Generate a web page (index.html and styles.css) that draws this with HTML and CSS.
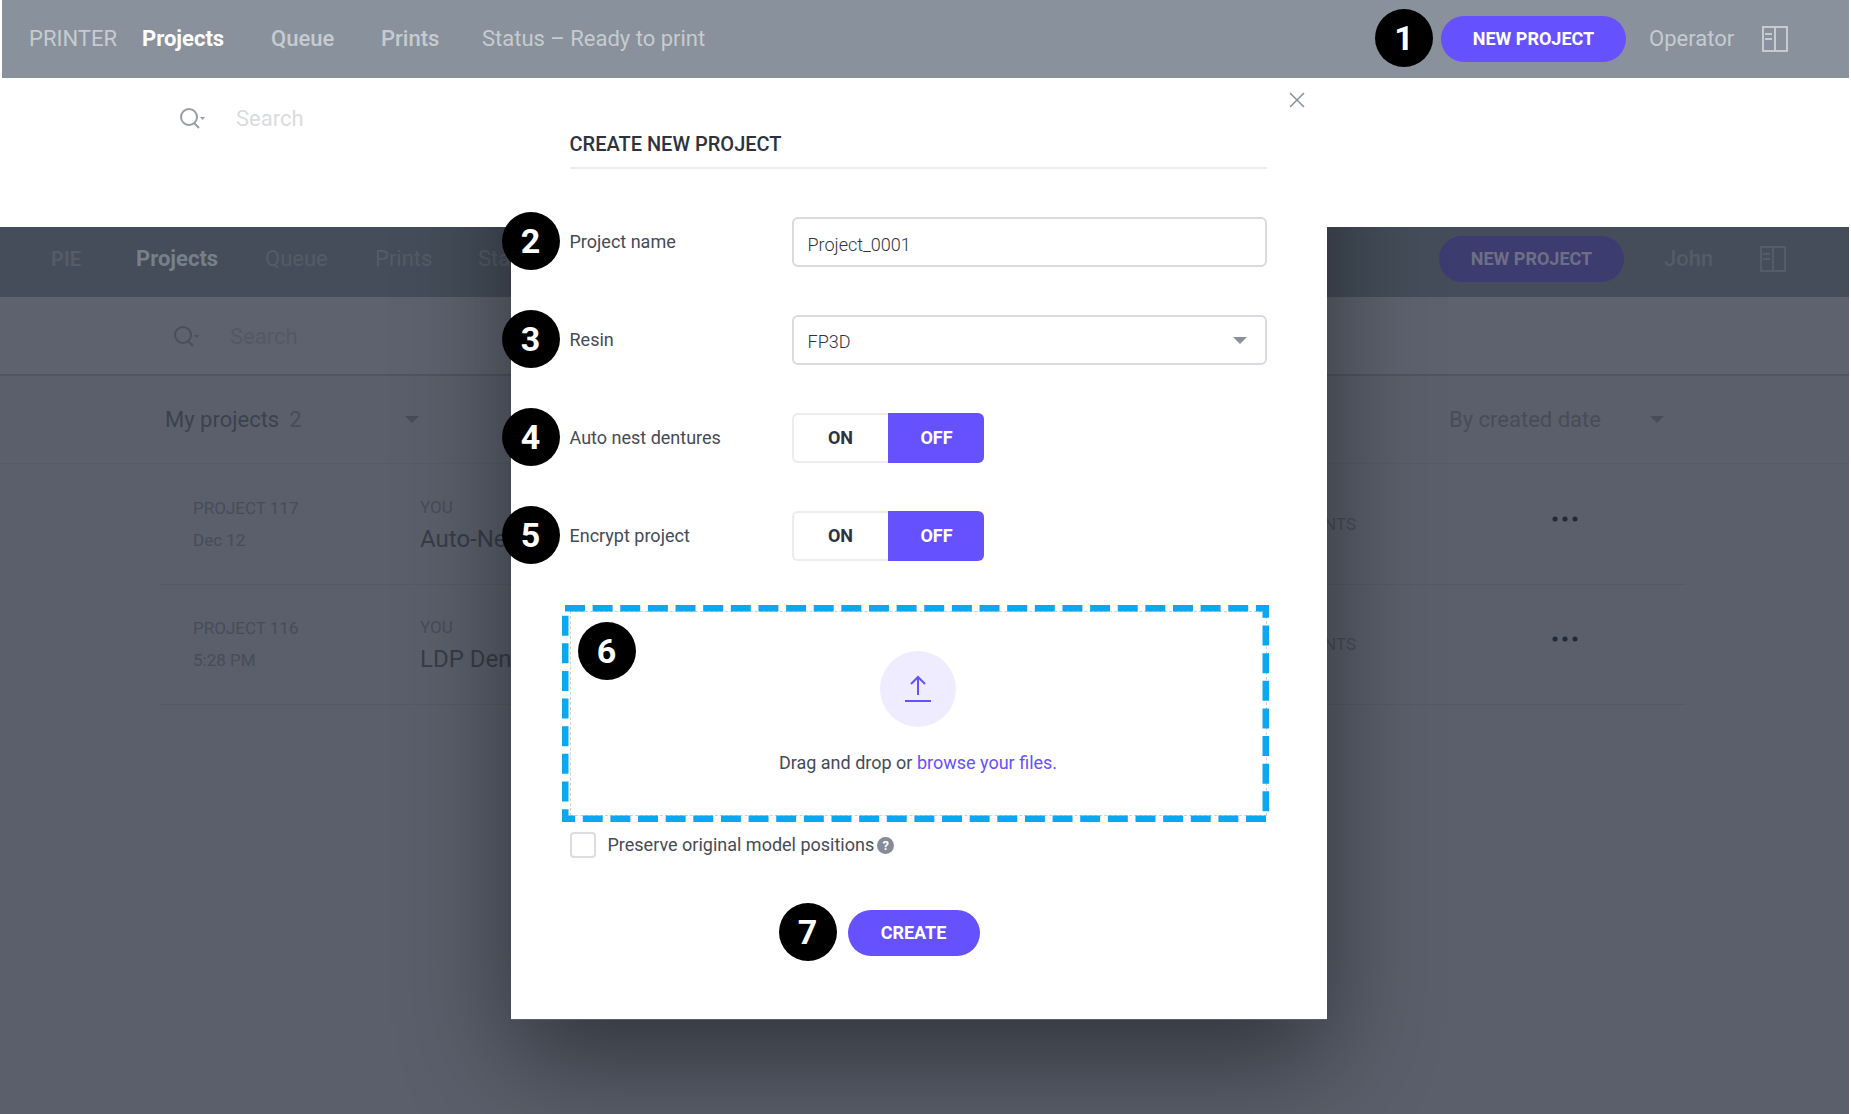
FILE: index.html
```html
<!DOCTYPE html>
<html lang="en">
<head>
  <meta charset="UTF-8" />
  <meta name="viewport" content="width=device-width, initial-scale=1.0"/>
  <title>Projects | Printer</title>
  <link rel="stylesheet" href="styles.css">
</head>
<body>

  <header class="topbar">
    <nav class="nav">
      <a href="#" class="brand">PRINTER</a>
      <a href="#" class="active">Projects</a>
      <a href="#" class="queue">Queue</a>
      <a href="#" class="prints">Prints</a>
      <a href="#" class="status">Status – Ready to print</a>
    </nav>
    <div class="account">
      <div class="step-anchor">
        <span class="step">1</span>
        <button class="pill" type="button">NEW PROJECT</button>
      </div>
      <a href="#" class="user">Operator</a>
      <button class="icon-btn" type="button" aria-label="Guide">
        <svg width="26" height="26" viewBox="0 0 26 26" fill="none" stroke="currentColor" stroke-width="2">
          <rect x="1" y="1" width="24" height="24"/>
          <path d="M13 1V25M3 8H10M3 13H10"/>
        </svg>
      </button>
    </div>
  </header>

  <div class="search">
    <svg class="search-icon" width="26" height="22" viewBox="0 0 26 22" fill="none" stroke="currentColor" stroke-width="2">
      <circle cx="9" cy="9" r="8"/>
      <path d="M14 15L19 20"/>
      <path d="M20 9H25L22.500 12Z" fill="currentColor" stroke="none"/>
    </svg>
    <input type="text" placeholder="Search" aria-label="Search projects">
  </div>

  <!-- dimmed application behind the dialog -->
  <main class="app">
    <header class="app-bar">
      <nav class="nav">
        <a href="#" class="brand">PIE</a>
        <a href="#" class="active">Projects</a>
        <a href="#" class="queue">Queue</a>
        <a href="#" class="prints">Prints</a>
        <a href="#" class="status">Status</a>
      </nav>
      <div class="account">
        <button class="pill" type="button">NEW PROJECT</button>
        <a href="#" class="user">John</a>
        <button class="icon-btn" type="button" aria-label="Guide">
          <svg width="26" height="26" viewBox="0 0 26 26" fill="none" stroke="currentColor" stroke-width="2">
            <rect x="1" y="1" width="24" height="24"/>
            <path d="M13 1V25M3 8H10M3 13H10"/>
          </svg>
        </button>
      </div>
    </header>

    <div class="app-search">
      <svg class="search-icon" width="26" height="22" viewBox="0 0 26 22" fill="none" stroke="currentColor" stroke-width="2">
        <circle cx="9" cy="9" r="8"/>
        <path d="M14 15L19 20"/>
        <path d="M20 9H25L22.500 12Z" fill="currentColor" stroke="none"/>
      </svg>
      <input type="text" placeholder="Search" aria-label="Search all projects">
    </div>

    <div class="filters">
      <button class="filter mine" type="button">My projects <span class="count">2</span><span class="caret"></span></button>
      <button class="filter sort" type="button">By created date<span class="caret"></span></button>
    </div>

    <table class="projects">
      <tr>
        <td class="when">PROJECT 117<br>Dec 12</td>
        <td class="what">YOU<br><span class="name">Auto-Nest</span></td>
        <td class="prints-count">PRINTS</td>
        <td class="more"><button type="button" aria-label="More">
          <svg width="26" height="6" viewBox="0 0 26 6" fill="currentColor"><circle cx="3" cy="3" r="2.500"/><circle cx="13" cy="3" r="2.500"/><circle cx="23" cy="3" r="2.500"/></svg>
        </button></td>
      </tr>
      <tr>
        <td class="when">PROJECT 116<br>5:28 PM</td>
        <td class="what">YOU<br><span class="name">LDP Denture</span></td>
        <td class="prints-count">PRINTS</td>
        <td class="more"><button type="button" aria-label="More">
          <svg width="26" height="6" viewBox="0 0 26 6" fill="currentColor"><circle cx="3" cy="3" r="2.500"/><circle cx="13" cy="3" r="2.500"/><circle cx="23" cy="3" r="2.500"/></svg>
        </button></td>
      </tr>
    </table>
    <div class="modal-shadow"></div>
  </main>

  <section class="modal" role="dialog" aria-labelledby="modalTitle">
    <button class="close" type="button" aria-label="Close">
      <svg width="16" height="16" viewBox="0 0 16 16" fill="none" stroke="currentColor" stroke-width="1.500"><path d="M1 1L15 15M15 1L1 15"/></svg>
    </button>
    <h1 id="modalTitle">CREATE NEW PROJECT</h1>

    <form>
      <div class="row">
        <span class="step">2</span>
        <label for="projectName">Project name</label>
        <input class="field" id="projectName" type="text" value="Project_0001">
      </div>

      <div class="row">
        <span class="step">3</span>
        <label for="resin">Resin</label>
        <div class="select">
          <select class="field" id="resin">
            <option>FP3D</option>
          </select>
          <span class="caret"></span>
        </div>
      </div>

      <div class="row" role="radiogroup" aria-labelledby="nestLabel">
        <span class="step">4</span>
        <span class="label" id="nestLabel">Auto nest dentures</span>
        <div class="toggle">
          <input type="radio" name="nest" id="nestOn"><label for="nestOn">ON</label>
          <input type="radio" name="nest" id="nestOff" checked><label for="nestOff">OFF</label>
        </div>
      </div>

      <div class="row" role="radiogroup" aria-labelledby="encryptLabel">
        <span class="step">5</span>
        <span class="label" id="encryptLabel">Encrypt project</span>
        <div class="toggle">
          <input type="radio" name="encrypt" id="encryptOn"><label for="encryptOn">ON</label>
          <input type="radio" name="encrypt" id="encryptOff" checked><label for="encryptOff">OFF</label>
        </div>
      </div>

      <div class="dropzone">
        <svg class="outline"><rect pathLength="1188"/></svg>
        <span class="step">6</span>
        <div class="drop-area">
          <span class="upload">
            <svg width="26" height="28" viewBox="0 0 26 28" fill="none" stroke="currentColor" stroke-width="2"><path d="M13 20V2M6 9L13 2L20 9M0 26H26"/></svg>
          </span>
          <p>Drag and drop or <a href="#">browse your files.</a></p>
        </div>
      </div>

      <div class="preserve">
        <input type="checkbox" id="preserve">
        <label for="preserve">Preserve original model positions</label>
        <span class="help">?</span>
      </div>

      <div class="actions">
        <div class="step-anchor">
          <span class="step">7</span>
          <button class="pill create" type="submit">CREATE</button>
        </div>
      </div>
    </form>
  </section>

</body>
</html>
```
FILE: styles.css
```css
* {
  box-sizing: border-box;
}

body {
  margin: 0;
  min-height: 100vh;
  display: flex;
  flex-direction: column;
  position: relative;
  font-family: Roboto, "Liberation Sans", sans-serif;
  font-size: 18px;
  line-height: 24px;
  color: #454b56;
  background: #fff;
}

a {
  color: inherit;
  text-decoration: none;
}

button, input, select {
  font: inherit;
  color: inherit;
}

button {
  padding: 0;
  border: none;
  background: none;
  cursor: pointer;
}

/* header bars */
.topbar, .app-bar {
  display: flex;
  justify-content: space-between;
  align-items: center;
  font-size: 22px;
}

.topbar {
  height: 78px;
  margin: 0 2px;
  padding: 0 61px 0 27px;
  background: #89919c;
  color: #c6cbd0;
}

.nav, .account {
  display: flex;
  align-items: center;
}

.topbar .brand {
  width: 113px;
}

.nav .active {
  width: 129px;
  font-weight: bold;
}

.topbar .active {
  color: #fff;
}

.nav .queue {
  width: 110px;
}

.nav .prints {
  width: 101px;
}

.topbar .queue, .topbar .prints {
  font-weight: 500;
}

.pill {
  width: 185px;
  height: 46px;
  border-radius: 23px;
  background: #6651ff;
  color: #fff;
  font-size: 18px;
  font-weight: bold;
}

.topbar .user {
  width: 113px;
  margin-left: 23px;
}

.icon-btn {
  display: flex;
}

/* search */
.search, .app-search {
  display: flex;
  align-items: center;
  gap: 30px;
  font-size: 22px;
}

.search {
  height: 149px;
  padding: 0 180px 68px;
  color: #999ea5;
}

.search input, .app-search input {
  width: 200px;
  padding: 0;
  border: none;
  outline: none;
  background: none;
}

.search input::placeholder {
  color: #dadcde;
}

.caret {
  border: 7px solid transparent;
  border-top-color: currentColor;
  border-bottom: none;
}

/* dimmed app */
.app {
  flex: 1;
  position: relative;
  overflow: hidden;
  margin-right: 2px;
  background: #5a5f6b;
}

.app-bar {
  height: 70px;
  padding: 0 63px 6px 51px;
  background: #444d59;
  color: #535c67;
}

.app-bar .brand {
  width: 85px;
  font-size: 20px;
  font-weight: bold;
}

.app-bar .active {
  color: #76808a;
}

.app-bar .prints {
  width: 103px;
}

.app-bar .pill {
  background: #3d3c70;
  color: #6d7085;
}

.app-bar .user {
  width: 96px;
  margin-left: 40px;
  font-weight: 500;
}

.app-search {
  height: 79px;
  padding: 2px 174px 0;
  border-bottom: 2px solid #4f5560;
  background: #5d626e;
  color: #484f5a;
}

.app-search input::placeholder {
  color: #525965;
  opacity: 1;
}

.filters {
  display: flex;
  justify-content: space-between;
  height: 88px;
  padding: 0 185px 0 165px;
  border-bottom: 1px solid #565b67;
  font-size: 22px;
}

.filter {
  display: flex;
  align-items: center;
  color: #464d58;
}

.mine {
  width: 254px;
  gap: 10px;
  color: #3a424e;
}

.count, .filter .caret {
  color: #464d58;
}

.filter .caret {
  margin-left: auto;
}

.sort {
  width: 215px;
}

.projects {
  width: calc(100% - 323px);
  margin-left: 160px;
  border-collapse: collapse;
  table-layout: fixed;
  color: #464d58;
}

.projects tr {
  height: 120px;
  border-bottom: 1px solid #545a65;
}

.projects td {
  padding: 0;
  font-size: 17px;
  line-height: 32px;
}

.projects .when {
  width: 260px;
  padding-left: 33px;
}

.projects .name {
  font-size: 24px;
  color: #363d49;
}

.projects .prints-count {
  padding-right: 60px;
  text-align: right;
}

.projects .more {
  width: 270px;
  padding: 0 0 16px 136px;
  color: #20283a;
}

.modal-shadow {
  position: absolute;
  top: -149px;
  bottom: 94px;
  left: calc(50% - 414px);
  width: 816px;
  box-shadow: 0 40px 100px rgba(0, 0, 0, 0.45);
}

/* dialog */
.modal {
  position: absolute;
  top: 78px;
  left: calc(50% - 415px);
  width: 816px;
  padding: 54px 60px 63px 59px;
  background: #fff;
}

.modal h1 {
  margin: 0 0 48px;
  padding-bottom: 11px;
  border-bottom: 2px solid #ececee;
  font-size: 20px;
  line-height: 24px;
  font-weight: 500;
  color: #2c333f;
}

.close {
  position: absolute;
  top: 14px;
  right: 22px;
  display: flex;
  color: #8a909a;
}

.row {
  position: relative;
  display: grid;
  grid-template-columns: 222px 1fr;
  align-items: center;
  height: 50px;
  margin-bottom: 48px;
}

.field {
  width: 100%;
  height: 50px;
  padding: 4px 14px 0;
  border: 2px solid #d9dadd;
  border-radius: 6px;
  background: #fff;
  color: #2c333f;
  font-weight: 300;
}

.select {
  position: relative;
}

.select .field {
  appearance: none;
}

.select .caret {
  position: absolute;
  top: 22px;
  right: 20px;
  color: #8a919c;
}

.toggle {
  display: flex;
  width: 192px;
}

.toggle input {
  position: absolute;
  opacity: 0;
}

.toggle label {
  width: 96px;
  height: 50px;
  border: 2px solid #ececee;
  border-right: none;
  border-radius: 6px 0 0 6px;
  color: #2c333f;
  font-size: 18px;
  font-weight: bold;
  line-height: 46px;
  text-align: center;
}

.toggle label:last-child {
  border-radius: 0 6px 6px 0;
}

.toggle input:checked + label {
  border-color: #6651ff;
  background: #6651ff;
  color: #fff;
}

/* numbered steps */
.step {
  position: absolute;
  display: flex;
  align-items: center;
  justify-content: center;
  width: 58px;
  height: 58px;
  border-radius: 50%;
  background: #000;
  color: #fff;
  font-size: 34px;
  font-weight: bold;
}

.row .step {
  top: -5px;
  left: -68px;
}

.step-anchor {
  position: relative;
}

.step-anchor .step {
  top: -7px;
  left: -66px;
}

.dropzone {
  position: relative;
  height: 217px;
  margin: -4px -2px 10px -8px;
  padding: 6px 2px 6px 8px;
}

.dropzone .step {
  top: 17px;
  left: 16px;
}

.outline {
  position: absolute;
  top: 0;
  left: 0;
  width: 100%;
  height: 100%;
}

.outline rect {
  x: 3px;
  y: 3px;
  width: calc(100% - 6px);
  height: calc(100% - 6px);
  fill: none;
  stroke: #0aa8f2;
  stroke-width: 7px;
  stroke-dasharray: 13 5;
}

.drop-area {
  display: flex;
  flex-direction: column;
  align-items: center;
  height: 100%;
  padding-top: 39px;
  border: 1px dashed #cfd1d6;
}

.upload {
  display: flex;
  align-items: center;
  justify-content: center;
  width: 76px;
  height: 76px;
  border-radius: 50%;
  background: #efecff;
  color: #6651ff;
}

.drop-area p {
  margin: 24px 0 0;
}

.drop-area a {
  color: #6651ff;
}

.preserve {
  display: flex;
  align-items: center;
  margin-bottom: 52px;
}

.preserve input {
  appearance: none;
  width: 26px;
  height: 26px;
  margin: 0 12px 0 0;
  border: 2px solid #dcdde0;
  border-radius: 4px;
}

.help {
  width: 17px;
  height: 17px;
  margin-left: 3px;
  border-radius: 50%;
  background: #858c97;
  color: #fff;
  font-size: 13px;
  font-weight: bold;
  line-height: 17px;
  text-align: center;
}

.actions {
  display: flex;
  justify-content: center;
  padding-right: 9px;
}

.create {
  width: 132px;
}

.actions .step {
  left: -69px;
}
```
